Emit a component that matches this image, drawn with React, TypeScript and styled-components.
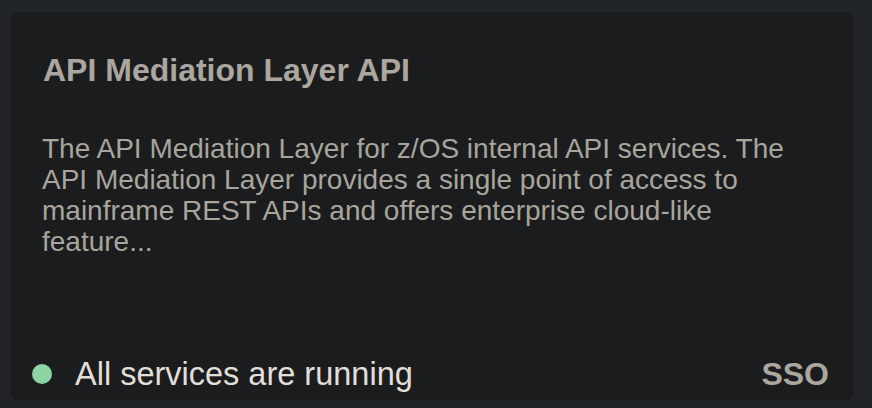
import React from "react";
import styled, { createGlobalStyle } from "styled-components";

const GlobalStyle = createGlobalStyle`
  html, body {
    margin: 0;
    padding: 0;
    background: #212426;
  }
  body {
    font-family: "Liberation Sans", Arial, Helvetica, sans-serif;
  }
`;

const Page = styled.div`
  box-sizing: border-box;
  width: 872px;
  height: 408px;
  padding: 12px 18px 8px 10px;
  display: flex;
`;

const Card = styled.section`
  flex: 1;
  display: flex;
  flex-direction: column;
  background: #1b1c1e;
  border-radius: 8px;
  padding: 42px 25px 10px 33px;
`;

const Title = styled.h2`
  margin: 0;
  font-size: 32px;
  line-height: 32px;
  font-weight: 700;
  color: #aba69e;
`;

const Description = styled.p`
  margin: 47px 0 0 -1px;
  font-size: 28px;
  line-height: 31px;
  color: #a9a49c;
`;

const Footer = styled.div`
  margin-top: auto;
  margin-left: -11px;
  display: flex;
  align-items: center;
  justify-content: space-between;
`;

const Status = styled.div`
  display: flex;
  align-items: center;
  gap: 23px;
  font-size: 32.5px;
  line-height: 32px;
  color: #e2ded8;
`;

const Dot = styled.span<{ $color: string }>`
  width: 20px;
  height: 20px;
  border-radius: 50%;
  background: ${(p) => p.$color};
  flex-shrink: 0;
`;

const Badge = styled.span`
  font-size: 32px;
  line-height: 32px;
  font-weight: 700;
  color: #aba69e;
`;

export default function App() {
  return (
    <>
      <GlobalStyle />
      <Page>
        <Card>
          <Title>API Mediation Layer API</Title>
          <Description>
            The API Mediation Layer for z/OS internal API services. The API
            Mediation Layer provides a single point of access to mainframe REST
            APIs and offers enterprise cloud-like feature...
          </Description>
          <Footer>
            <Status>
              <Dot $color="#8dd4a4" />
              All services are running
            </Status>
            <Badge>SSO</Badge>
          </Footer>
        </Card>
      </Page>
    </>
  );
}
